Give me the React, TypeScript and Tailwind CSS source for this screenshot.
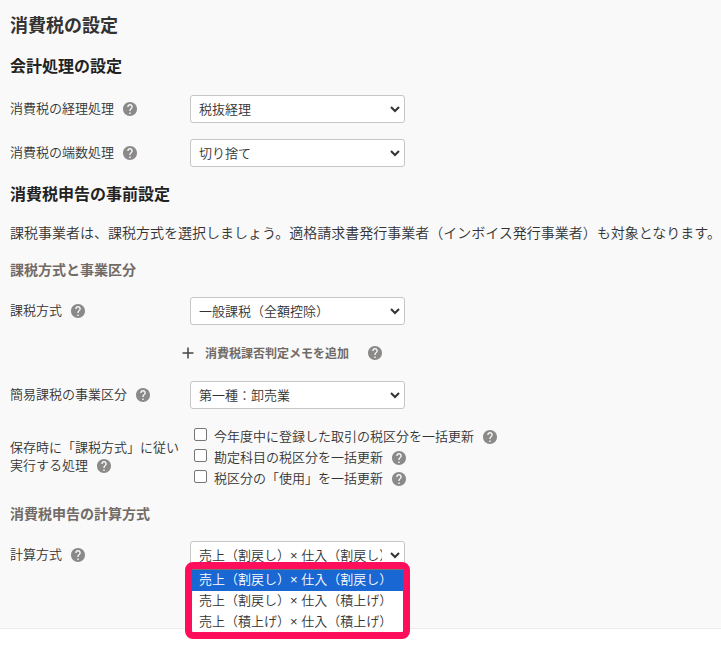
import type { ReactNode } from 'react'

const calcMethods = [
  '売上（割戻し）× 仕入（割戻し）',
  '売上（割戻し）× 仕入（積上げ）',
  '売上（積上げ）× 仕入（積上げ）',
]

const updateTargets = [
  '今年度中に登録した取引の税区分を一括更新',
  '勘定科目の税区分を一括更新',
  '税区分の「使用」を一括更新',
]

function HelpIcon({ className = '' }: { className?: string }) {
  return (
    <svg viewBox="2 2 20 20" className={`inline-block size-3.5 shrink-0 fill-[#8c8989] ${className}`}>
      <path d="M12 2C6.48 2 2 6.48 2 12s4.48 10 10 10 10-4.48 10-10S17.52 2 12 2zm1 17h-2v-2h2v2zm2.07-7.75l-.9.92C13.45 12.9 13 13.5 13 15h-2v-.5c0-1.1.45-2.1 1.17-2.83l1.24-1.26c.37-.36.59-.86.59-1.41 0-1.1-.9-2-2-2s-2 .9-2 2H8c0-2.21 1.79-4 4-4s4 1.79 4 4c0 .88-.36 1.68-.93 2.25z" />
    </svg>
  )
}

function SelectBox({ value }: { value: string }) {
  return (
    <div className="flex h-7 w-[215px] items-center rounded-[3px] border border-[#c6c6c6] bg-white pl-2 pr-1">
      <span className="flex-1 overflow-hidden pt-[2px] whitespace-nowrap">{value}</span>
      <svg viewBox="0 0 10 7" className="ml-2 h-[7px] w-2.5 shrink-0 fill-none stroke-[#333] stroke-2">
        <path d="M1 1l4 4 4-4" />
      </svg>
    </div>
  )
}

function Row({ label, children }: { label: string; children: ReactNode }) {
  return (
    <div className="flex h-7 items-center">
      <div className="flex w-[180px] items-center">
        {label}
        <HelpIcon className="ml-[9px]" />
      </div>
      {children}
    </div>
  )
}

export default function App() {
  return (
    <div className="h-[646px] w-[721px] overflow-hidden bg-white font-['Liberation_Sans','Noto_Sans_CJK_JP',sans-serif] text-[13px] leading-[18px] font-[350] text-[#333]">
      <main className="h-[629px] border-b border-[#ececec] bg-[#f9f9f9] pl-2.5 pt-[13px]">
        <h1 className="text-lg leading-[26px] font-bold">消費税の設定</h1>

        <h2 className="mt-4 text-base leading-6 font-bold text-[#222]">会計処理の設定</h2>
        <div className="mt-4 flex flex-col gap-4">
          <Row label="消費税の経理処理">
            <SelectBox value="税抜経理" />
          </Row>
          <Row label="消費税の端数処理">
            <SelectBox value="切り捨て" />
          </Row>
        </div>

        <h2 className="mt-4 text-base leading-6 font-bold text-[#222]">消費税申告の事前設定</h2>
        <p className="mt-4 text-sm leading-5 whitespace-nowrap">
          課税事業者は、課税方式を選択しましょう。適格請求書発行事業者（インボイス発行事業者）も対象となります。
        </p>

        <h3 className="mt-[17px] text-sm leading-5 font-bold text-[#716b67]">課税方式と事業区分</h3>
        <div className="mt-[17px]">
          <Row label="課税方式">
            <SelectBox value="一般課税（全額控除）" />
          </Row>
        </div>
        <div className="my-[18px] ml-[172px] flex h-5 items-center text-xs font-bold text-[#716b67]">
          <svg viewBox="0 0 12 12" className="size-3 fill-none stroke-[#444] stroke-[1.5]">
            <path d="M6 .5v11M.5 6h11" />
          </svg>
          <span className="ml-[11px] pt-px">消費税課否判定メモを追加</span>
          <HelpIcon className="ml-[19px]" />
        </div>
        <Row label="簡易課税の事業区分">
          <SelectBox value="第一種：卸売業" />
        </Row>

        <div className="mt-4 flex items-center">
          <div className="w-[180px] whitespace-nowrap">
            保存時に「課税方式」に従い
            <br />
            実行する処理
            <HelpIcon className="ml-[9px] align-[-3px]" />
          </div>
          <div className="pl-1">
            {updateTargets.map((target) => (
              <label key={target} className="flex h-[21px] items-center">
                <span className="mb-[3px] size-[13px] rounded-[2px] border border-[#767676] bg-white" />
                <span className="ml-[7px] pt-[2px]">{target}</span>
                <HelpIcon className="mt-[3px] ml-[9px]" />
              </label>
            ))}
          </div>
        </div>

        <h3 className="mt-4 text-sm leading-5 font-bold text-[#716b67]">消費税申告の計算方式</h3>
        <div className="relative mt-[17px]">
          <Row label="計算方式">
            <SelectBox value={calcMethods[0]} />
          </Row>
          {/* open option list */}
          <ul className="absolute left-[175px] top-[21px] h-[77px] w-[225px] rounded-lg border-[7px] border-[#ff0f5b] bg-white leading-[19px]">
            {calcMethods.map((method, i) => (
              <li
                key={method}
                className={`pl-[7px] whitespace-nowrap ${
                  i === 0 ? 'h-[22px] border-t border-[#767676] bg-[#1967d2] text-white' : 'h-[21px]'
                }`}
              >
                {method}
              </li>
            ))}
          </ul>
        </div>
      </main>
    </div>
  )
}
